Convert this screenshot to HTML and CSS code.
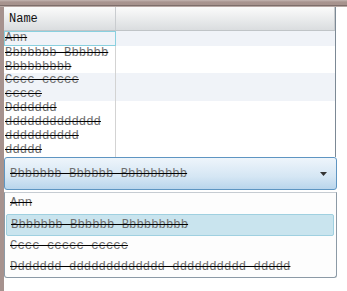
FILE: index.html
```html
<!DOCTYPE html>
<html>
<head>
<meta charset="utf-8">
<link rel="stylesheet" href="styles.css">
</head>
<body>
<div class="top"></div>
<div class="frame">
  <div class="strip"></div>
  <div class="content">
    <div class="table">
      <div class="header">
        <div class="hcell">Name</div>
        <div class="hcell"></div>
      </div>
      <div class="row odd r1">
        <div class="cell focus"><span class="st">Ann</span></div>
        <div class="cell"></div>
      </div>
      <div class="row r2">
        <div class="cell"><span class="st">Bbbbbbb Bbbbbb Bbbbbbbbb</span></div>
        <div class="cell"></div>
      </div>
      <div class="row odd r3">
        <div class="cell"><span class="st">Cccc ccccc ccccc</span></div>
        <div class="cell"></div>
      </div>
      <div class="row r4">
        <div class="cell"><span class="st">Ddddddd ddddddddddddd dddddddddd ddddd</span></div>
        <div class="cell"></div>
      </div>
    </div>
    <div class="combo">
      <span class="st">Bbbbbbb Bbbbbb Bbbbbbbbb</span>
      <svg class="arrow" width="7" height="4" viewBox="0 0 7 4"><path d="M0 0H7L3.5 4Z" fill="#333"/></svg>
    </div>
    <div class="list">
      <div class="item"><span class="st">Ann</span></div>
      <div class="item sel"><span class="st">Bbbbbbb Bbbbbb Bbbbbbbbb</span></div>
      <div class="item"><span class="st">Cccc ccccc ccccc</span></div>
      <div class="item"><span class="st">Ddddddd ddddddddddddd dddddddddd ddddd</span></div>
    </div>
  </div>
</div>
</body>
</html>
```
FILE: styles.css
```css
html, body {
  margin: 0;
  padding: 0;
  background: #ffffff;
}
body {
  width: 347px;
  height: 291px;
  overflow: hidden;
  font-family: "Liberation Mono", monospace;
  font-size: 12.3px;
}
.top {
  height: 7px;
  background: linear-gradient(#c4b6b2 0, #a8948f 2px, #a6928d 5px, #7e6e6b 5px, #7e6e6b 6px, #b7a8a4 6px);
}
.frame {
  display: flex;
  height: 284px;
}
.strip {
  width: 4px;
  background: #a6928e;
}
.content {
  width: 332px;
  display: flex;
  flex-direction: column;
}
.table {
  height: 150px;
  border-right: 1px solid #7c8995;
  display: flex;
  flex-direction: column;
}
.header {
  display: grid;
  grid-template-columns: 112px 1fr;
  height: 23px;
  background: linear-gradient(#fbfbfb, #dadddf);
  border-bottom: 1px solid #c0c4c7;
}
.hcell {
  display: flex;
  align-items: center;
  padding-left: 5px;
  color: #111;
  font-size: 12px;
  border-right: 1px solid #c9cccf;
}
.hcell + .hcell {
  border-right: 1px solid #c9cccf;
}
.row {
  display: grid;
  grid-template-columns: 112px 1fr;
  background: #ffffff;
}
.row.odd {
  background: #f0f3f8;
}
.r1 { height: 15px; }
.r2 { height: 27px; }
.r3 { height: 28px; }
.r4 { height: 56px; }
.cell {
  border-right: 1px solid #d3d3d3;
  padding-left: 1px;
  line-height: 14px;
  box-sizing: border-box;
}
.cell + .cell {
  border-right: none;
}
.cell.focus {
  border: 1px solid #8ad0df;
  padding-left: 0;
  line-height: 13px;
}
.st {
  color: #6f6f6f;
  text-decoration: line-through;
  text-decoration-color: #000;
}
.combo {
  height: 31px;
  border: 1px solid #5e95c2;
  border-radius: 3px;
  background: linear-gradient(#eef5fb, #d5e6f4 60%, #b9d5ec);
  display: flex;
  align-items: center;
  justify-content: space-between;
  padding: 0 9px 0 5px;
  margin-right: -1px;
}
.arrow {
  display: block;
  margin-top: 1px;
}
.list {
  margin-top: 2px;
  height: 84px;
  border: 1px solid #8c9aa6;
  border-top-color: #c6ccd2;
  border-radius: 0 0 3px 3px;
  background: #fdfdfd;
  margin-right: -1px;
  display: flex;
  flex-direction: column;
}
.item {
  height: 21px;
  display: flex;
  align-items: center;
  padding-left: 5px;
  white-space: nowrap;
}
.item.sel {
  height: 22px;
  box-sizing: border-box;
  margin: 0 2px 0 1px;
  padding-left: 4px;
  background: #c9e4ee;
  border: 1px solid #9fd0e0;
  border-radius: 2px;
}
```
